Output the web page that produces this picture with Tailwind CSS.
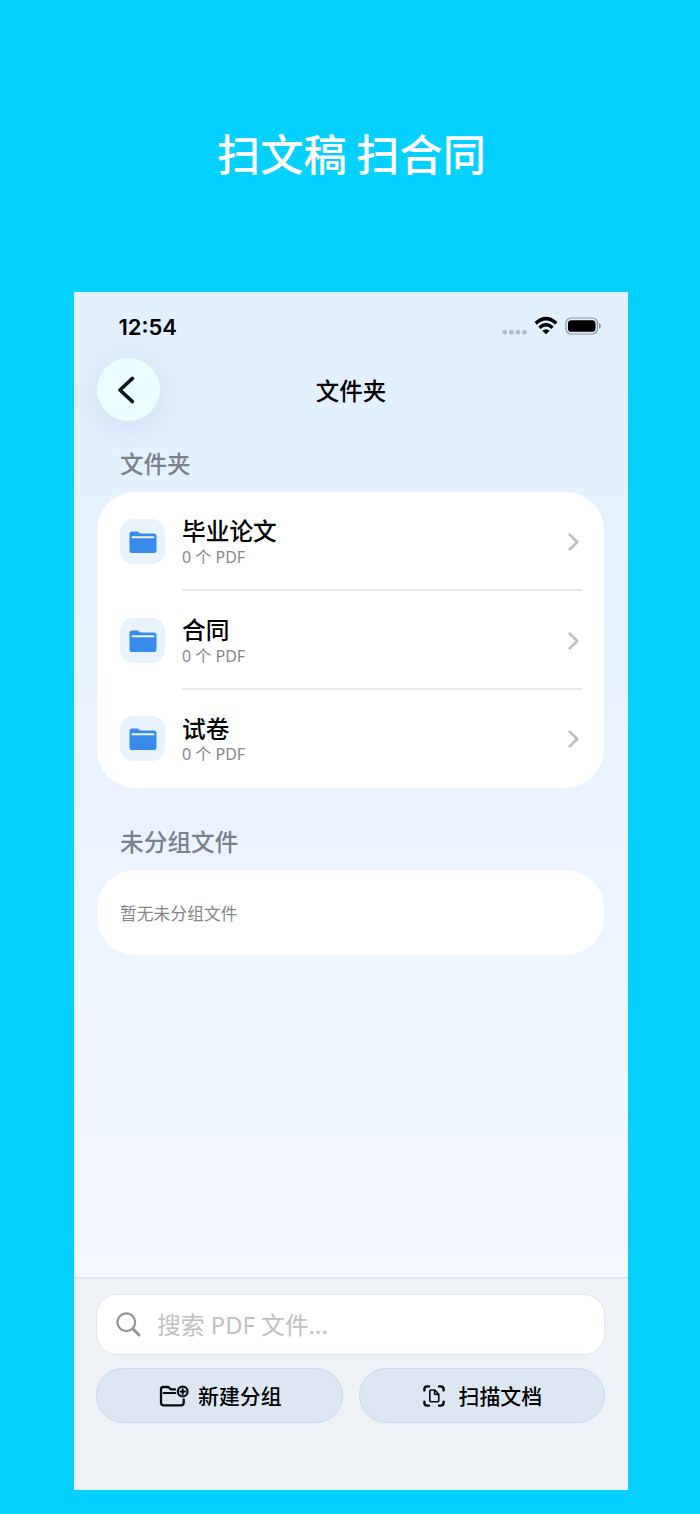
<!DOCTYPE html>
<html lang="zh-CN">
<head>
<meta charset="utf-8">
<title>文件夹</title>
<script src="https://cdn.jsdelivr.net/npm/@tailwindcss/browser@4"></script>
</head>
<body class="bg-[#04d1ff]">
<svg class="hidden">
  <symbol id="folder" viewBox="0 0 28 24">
    <path fill="#388bea" d="M.5 4Q.5 1.500 3 1.500H8Q9.300 1.500 10 2.400Q10.900 3.400 12 3.400H24.600Q27.500 3.400 27.500 6.200V20.200Q27.500 23 24.700 23H3.300Q.5 23 .5 20.200Z"/>
    <path stroke="#eef6ff" stroke-width="1.900" stroke-linecap="round" d="M3.500 7.200H24.500"/>
  </symbol>
  <symbol id="chevron" viewBox="0 0 12 18">
    <path fill="none" stroke="#bdbdbf" stroke-width="2.700" stroke-linecap="round" stroke-linejoin="round" d="M1.700 1.600L9.200 9L1.700 16.400"/>
  </symbol>
</svg>
<div class="flex h-[1514px] w-[700px] flex-col items-center overflow-hidden bg-[#04d1ff] font-['Noto_Sans','Noto_Sans_CJK_SC',sans-serif] text-black">
  <h1 class="flex h-[292px] w-full items-center justify-center pt-[11px] pl-[3px] font-['Noto_Sans_CJK_SC',sans-serif] text-[43.2px] leading-[64px] font-medium whitespace-nowrap text-white">扫文稿 扫合同</h1>
  <main class="ml-[2px] flex h-[1198px] w-[554px] flex-col overflow-hidden bg-linear-to-b from-[#e1efff] via-[#ebf4ff] to-[#f9faff]">
    <div class="flex h-[66px] shrink-0 items-start justify-between pr-[26px] pl-[44.500px]">
      <div class="pt-[21px] font-['Inter',sans-serif] text-[22px] leading-[28px] font-semibold">12:54</div>
      <div class="flex items-center pt-[24px]">
        <svg class="mt-[13px] h-[6px] w-[26px]" viewBox="0 0 26 6" fill="#b1bfce"><rect x=".5" y="1" width="4.500" height="4.500" rx="1.500"/><rect x="7.100" y="1" width="4.500" height="4.500" rx="1.500"/><rect x="13.700" y="1" width="4.500" height="4.500" rx="1.500"/><rect x="20.300" y="1" width="4.500" height="4.500" rx="1.500"/></svg>
        <svg class="ml-[6px] h-[19px] w-[24px]" viewBox="0 0 24 19"><g fill="none" stroke="#000" stroke-width="3.500"><path d="M1.700 7.400Q12 -2 22.300 7.400"/><path d="M5.500 11.700Q12 5.600 18.500 11.700"/></g><path d="M12 18.200L8.300 14.700Q12 11.700 15.700 14.700Z"/></svg>
        <svg class="mt-px ml-[7px] h-[18px] w-[37px]" viewBox="0 0 37 18"><rect x="1" y="1" width="31.500" height="16" rx="5" fill="none" stroke="#8796a4" stroke-width="1.200"/><rect x="3" y="3.200" width="27.500" height="11.600" rx="3.400"/><path fill="#8796a4" d="M34 6.300Q36 7 36 9Q36 11 34 11.700Z"/></svg>
      </div>
    </div>
    <header class="grid h-[63px] shrink-0 grid-cols-[64px_1fr_64px] items-center px-[22px]">
      <div class="ml-px flex size-[63px] items-center justify-center rounded-full bg-[#ecfdff] shadow-[0_8px_30px_rgba(70,100,140,0.12)]">
        <svg class="mr-[6px] h-[28px] w-[18px]" viewBox="0 0 18 28"><path fill="none" stroke="#0b1415" stroke-width="3.500" stroke-linecap="round" stroke-linejoin="round" d="M15.400 2.400L3 14L15.400 25.600"/></svg>
      </div>
      <div class="pt-[3px] text-center text-[23.500px] leading-[32px] font-medium">文件夹</div>
    </header>
    <section class="px-[23px] pt-[27px]">
      <h2 class="pl-[23px] text-[23.500px] leading-[32px] font-medium text-[#7b818e]">文件夹</h2>
      <div class="mt-[12px] h-[296px] w-[507px] rounded-[38px] bg-white">
        <div class="flex h-[99px] pt-[27px] pr-[22px] pl-[23px]">
          <div class="flex size-[45px] items-center justify-center rounded-[13px] bg-[#e7f2fd]"><svg class="h-[24px] w-[28px]"><use href="#folder"/></svg></div>
          <div class="ml-[17px] flex flex-1 justify-between border-b-2 border-[#e9e9ea]">
            <div><div class="-mt-[4px] text-[23.700px] leading-[33px] font-medium">毕业论文</div><div class="text-[16px] leading-[18px] text-[#87878a]">0 个 PDF</div></div>
            <svg class="mt-[14px] mr-[2px] h-[18px] w-[12px]"><use href="#chevron"/></svg>
          </div>
        </div>
        <div class="flex h-[99px] pt-[27px] pr-[22px] pl-[23px]">
          <div class="flex size-[45px] items-center justify-center rounded-[13px] bg-[#e7f2fd]"><svg class="h-[24px] w-[28px]"><use href="#folder"/></svg></div>
          <div class="ml-[17px] flex flex-1 justify-between border-b-2 border-[#e9e9ea]">
            <div><div class="-mt-[4px] text-[23.700px] leading-[33px] font-medium">合同</div><div class="text-[16px] leading-[18px] text-[#87878a]">0 个 PDF</div></div>
            <svg class="mt-[14px] mr-[2px] h-[18px] w-[12px]"><use href="#chevron"/></svg>
          </div>
        </div>
        <div class="flex h-[98px] pt-[26px] pr-[22px] pl-[23px]">
          <div class="flex size-[45px] items-center justify-center rounded-[13px] bg-[#e7f2fd]"><svg class="h-[24px] w-[28px]"><use href="#folder"/></svg></div>
          <div class="ml-[17px] flex flex-1 justify-between">
            <div><div class="-mt-[3px] text-[23.700px] leading-[32px] font-medium">试卷</div><div class="text-[16px] leading-[18px] text-[#87878a]">0 个 PDF</div></div>
            <svg class="mt-[14px] mr-[2px] h-[18px] w-[12px]"><use href="#chevron"/></svg>
          </div>
        </div>
      </div>
    </section>
    <section class="px-[23px] pt-[38px]">
      <h2 class="pl-[23px] text-[23.700px] leading-[32px] font-medium text-[#7b818e]">未分组文件</h2>
      <div class="mt-[12px] flex h-[85px] w-[507px] items-center rounded-[38px] bg-white pt-[2px] pl-[23px] text-[16.800px] text-[#87878a]">暂无未分组文件</div>
    </section>
    <footer class="mt-auto h-[213px] shrink-0 border-t-2 border-[#e2e6eb] bg-[#eef2f6] px-[22px] pt-[15px]">
      <div class="flex h-[61px] w-[509px] items-center rounded-[21px] border border-[#e1e5e9] bg-white pl-[19px]">
        <svg class="size-[25px]" viewBox="0 0 25 25" fill="none" stroke="#929292"><circle cx="10.300" cy="10.300" r="8.900" stroke-width="2.200"/><path d="M16.800 16.800L23 23" stroke-width="2.900" stroke-linecap="round"/></svg>
        <span class="ml-[16px] text-[23.800px] leading-[32px] text-[#bfbfc1]">搜索 PDF 文件...</span>
      </div>
      <div class="mt-[13px] flex w-[509px] justify-between">
        <div class="flex h-[55px] w-[246.500px] items-center rounded-full border border-[#c5daf5] bg-[#dde7f4] pl-[62px]">
          <svg class="h-[22px] w-[30px]" viewBox="0 0 30 22" fill="none" stroke="#0a0d12" stroke-width="2.300" stroke-linecap="round" stroke-linejoin="round"><path d="M16 4.400H12.500Q11.600 4.400 11 3.700L10 2.500Q9.400 2 8.500 2H4Q2 2 2 4.200V17.800Q2 20.300 4.700 20.300H22Q24.700 20.300 24.700 17.800V14.300"/><path stroke-width="1.900" d="M4.500 8H16.300"/><circle cx="23.700" cy="6.600" r="4.900" stroke-width="2.200"/><path stroke-width="2" d="M23.700 4.300V8.900M21.400 6.600H26"/></svg>
          <span class="ml-[9px] text-[20.900px] leading-[28px] font-medium">新建分组</span>
        </div>
        <div class="flex h-[55px] w-[246.500px] items-center rounded-full border border-[#c5daf5] bg-[#dde7f4] pl-[63px]">
          <svg class="size-[22px]" viewBox="0 0 22 22" fill="none" stroke="#0a0d12" stroke-width="2.400" stroke-linecap="round" stroke-linejoin="round"><path d="M1.400 5.400V4.200Q1.400 1.400 4.200 1.400H6M16 1.400H17.800Q20.600 1.400 20.600 4.200V5.400M20.600 16.600V17.800Q20.600 20.600 17.800 20.600H16M6 20.600H4.200Q1.400 20.600 1.400 17.800V16.600"/><path stroke-width="1.600" d="M8 5H11.800L15.800 9.200V15.500Q15.800 16.700 14.600 16.700H8Q6.800 16.700 6.800 15.500V6.200Q6.800 5 8 5ZM11.600 5.200V8.400Q11.600 9.400 12.600 9.400H15.600"/></svg>
          <span class="ml-[14px] text-[20.900px] leading-[28px] font-medium">扫描文档</span>
        </div>
      </div>
    </footer>
  </main>
</div>
</body>
</html>
